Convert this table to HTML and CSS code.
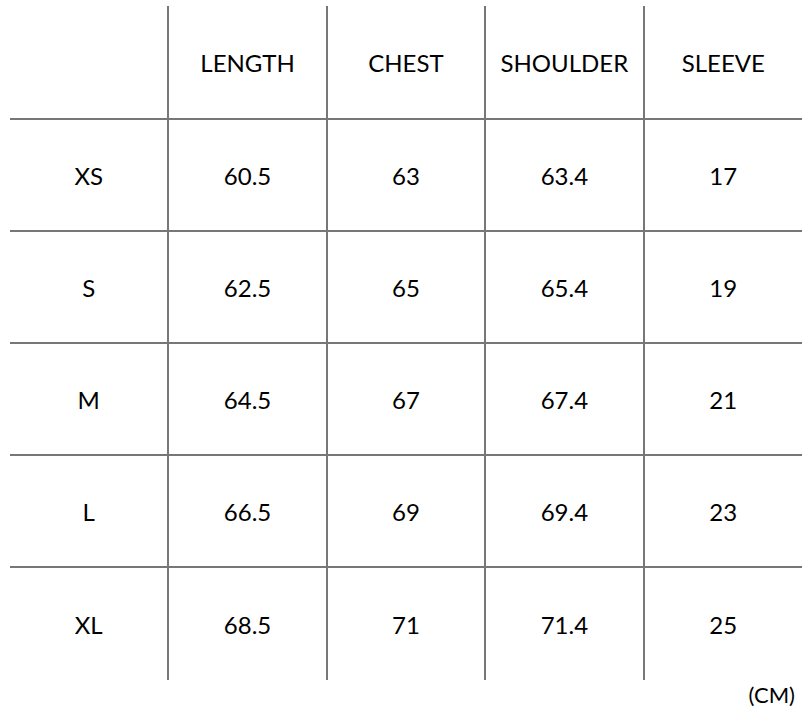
FILE: index.html
```html
<!DOCTYPE html>
<html>
<head>
<meta charset="utf-8">
<link rel="stylesheet" href="styles.css">
</head>
<body>
<div class="wrap">
<table class="size-table">
  <tr class="head"><td></td><td>LENGTH</td><td>CHEST</td><td>SHOULDER</td><td>SLEEVE</td></tr>
  <tr><td>XS</td><td>60.5</td><td>63</td><td>63.4</td><td>17</td></tr>
  <tr><td>S</td><td>62.5</td><td>65</td><td>65.4</td><td>19</td></tr>
  <tr><td>M</td><td>64.5</td><td>67</td><td>67.4</td><td>21</td></tr>
  <tr><td>L</td><td>66.5</td><td>69</td><td>69.4</td><td>23</td></tr>
  <tr class="last"><td>XL</td><td>68.5</td><td>71</td><td>71.4</td><td>25</td></tr>
</table>
<div class="unit">(CM)</div>
</div>
</body>
</html>
```
FILE: styles.css
```css
html, body {
  margin: 0;
  padding: 0;
  background: #fff;
}
.wrap {
  padding: 6px 6px 0 10px;
  font-family: "Lato", "Open Sans", sans-serif;
  color: #000;
}
.size-table {
  width: 792px;
  border-collapse: collapse;
  table-layout: fixed;
}
.size-table td {
  height: 110px;
  padding: 0;
  text-align: center;
  vertical-align: middle;
  font-size: 24px;
  border-right: 2px solid #777;
  border-bottom: 2px solid #777;
}
.size-table .head td {
  height: 112px;
}
.size-table .last td {
  height: 112px;
}
.size-table td:last-child {
  border-right: none;
}
.size-table tr:last-child td {
  border-bottom: none;
}
.unit {
  text-align: right;
  font-size: 22px;
  padding-right: 7px;
  margin-top: 1px;
}
```
